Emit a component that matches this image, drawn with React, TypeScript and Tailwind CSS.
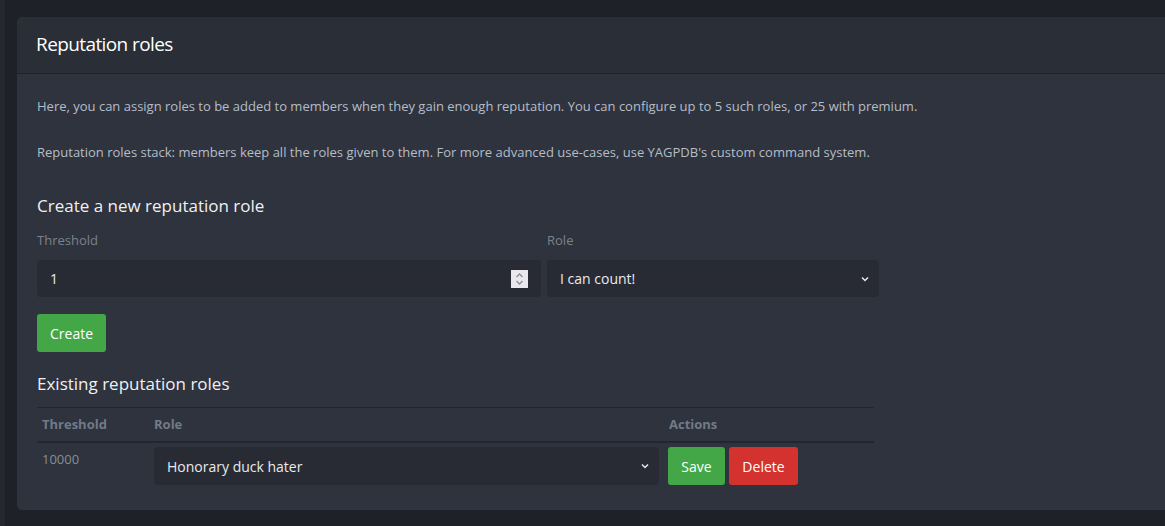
import React from "react";

const FONT = { fontFamily: '"Open Sans", "Noto Sans", sans-serif' };

function Chevron() {
  return (
    <svg width="10" height="10" viewBox="0 0 10 10" className="shrink-0">
      <path d="M2 3.5 L5 6.5 L8 3.5" fill="none" stroke="#e6e8ec" strokeWidth="1.5" />
    </svg>
  );
}

function Spinner() {
  return (
    <div className="flex h-[18px] w-[17px] flex-col items-center justify-center bg-[#e9e9ed]">
      <svg width="11" height="14" viewBox="0 0 11 14">
        <path d="M2.5 5 L5.5 2 L8.5 5" fill="none" stroke="#8f8f9d" strokeWidth="1.4" />
        <path d="M2.5 9 L5.5 12 L8.5 9" fill="none" stroke="#8f8f9d" strokeWidth="1.4" />
      </svg>
    </div>
  );
}

function SelectBox({ value, className }: { value: string; className: string }) {
  return (
    <div
      className={`flex h-[38px] items-center justify-between rounded-[4px] bg-[#282b33] pl-[13px] pr-[9px] text-[14px] text-[#e8eaee] ${className}`}
    >
      <span>{value}</span>
      <Chevron />
    </div>
  );
}

export default function App() {
  return (
    <div className="flex min-h-[526px] w-full overflow-hidden bg-[#1e2128]" style={FONT}>
      {/* left rail */}
      <div className="w-[5px] shrink-0 bg-[#25282f]" />
      <div className="pl-[12px] pt-[17px] pb-[16px]">
        <div className="w-[1170px] overflow-hidden rounded-[5px] bg-[#2e333d]">
          {/* header */}
          <div className="flex h-[57px] items-center border-b border-[#1f2228] bg-[#2a2e36] px-[19px] pb-[2px]">
            <h2 className="text-[19px] tracking-[-0.6px] text-white">Reputation roles</h2>
          </div>

          {/* body */}
          <div className="px-[20px] pt-[22px] pb-[21px]">
            <p className="mb-[26px] text-[13px] leading-[20px] text-[#b6bdc8]">
              Here, you can assign roles to be added to members when they gain enough reputation. You can configure up to 5 such roles, or 25 with premium.
            </p>
            <p className="text-[13px] leading-[20px] text-[#b6bdc8]">
              Reputation roles stack: members keep all the roles given to them. For more advanced use-cases, use YAGPDB's custom command system.
            </p>

            <h3 className="mt-[34px] text-[17px] leading-[20px] text-[#eef0f3]">Create a new reputation role</h3>

            <div className="mt-[14px] flex gap-[6px]">
              <div className="w-[504px]">
                <div className="text-[13px] leading-[20px] text-[#7b828e]">Threshold</div>
                <div className="mt-[10px] flex h-[37px] items-center justify-between rounded-[4px] bg-[#282b33] pl-[13px] pr-[13px] text-[14px] text-[#e8eaee]">
                  <span>1</span>
                  <Spinner />
                </div>
              </div>
              <div className="w-[332px]">
                <div className="text-[13px] leading-[20px] text-[#7b828e]">Role</div>
                <SelectBox value="I can count!" className="mt-[10px] w-full !h-[37px]" />
              </div>
            </div>

            <button className="mt-[17px] h-[38px] rounded-[3px] bg-[#43a748] px-[13px] text-[14px] text-white">
              Create
            </button>

            <h3 className="mt-[22px] text-[17px] leading-[20px] text-[#eef0f3]">Existing reputation roles</h3>

            <table className="mt-[13px] w-[837px] border-collapse text-left">
              <thead>
                <tr className="border-t border-b-2 border-[#23262d]">
                  <th className="w-[112px] px-[5px] py-[7px] text-[13px] font-bold leading-[19px] text-[#717a89]">Threshold</th>
                  <th className="w-[514px] px-[5px] py-[7px] text-[13px] font-bold leading-[19px] text-[#717a89]">Role</th>
                  <th className="px-[5px] py-[7px] text-[13px] font-bold leading-[19px] text-[#717a89]">Actions</th>
                </tr>
              </thead>
              <tbody>
                <tr>
                  <td className="px-[5px] pt-[6px] pb-[4px] align-top text-[13px] leading-[20px] text-[#868d98]">10000</td>
                  <td className="px-[5px] pt-[4px] pb-[4px] align-top">
                    <SelectBox value="Honorary duck hater" className="w-[505px]" />
                  </td>
                  <td className="pl-[4px] pr-[5px] pt-[4px] pb-[4px] align-top">
                    <div className="flex gap-[4px]">
                      <button className="h-[38px] w-[57px] rounded-[3px] bg-[#43a748] text-[14px] text-white">Save</button>
                      <button className="h-[38px] w-[69px] rounded-[3px] bg-[#d3322f] text-[14px] text-white">Delete</button>
                    </div>
                  </td>
                </tr>
              </tbody>
            </table>
          </div>
        </div>
      </div>
    </div>
  );
}
